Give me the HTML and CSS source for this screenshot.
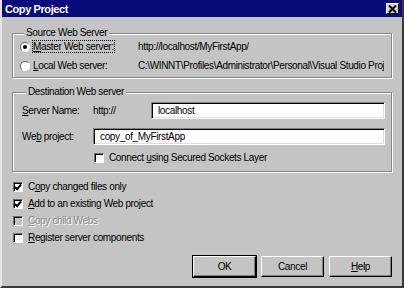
FILE: index.html
```html
<!DOCTYPE html>
<html lang="en">
<head>
    <meta charset="UTF-8">
    <title>Copy Project</title>
    <link rel="stylesheet" href="styles.css">
</head>
<body>
    <div class="dialog">
        <div class="titlebar">
            <span class="title">Copy Project</span>
            <span class="close-btn">
                <svg width="9" height="8" viewBox="0 0 9 8"><path d="M1 0.5 L8 7.5 M8 0.5 L1 7.5" stroke="#000" stroke-width="2"/></svg>
            </span>
        </div>

        <div class="content">
            <!-- Source server -->
            <fieldset class="group source">
                <legend>Source Web Server</legend>
                <div class="radio-row">
                    <span class="radio checked"></span>
                    <span class="radio-label"><span class="focus"><u>M</u>aster Web server:</span></span>
                    <span class="value">http://localhost/MyFirstApp/</span>
                </div>
                <div class="radio-row">
                    <span class="radio"></span>
                    <span class="radio-label"><u>L</u>ocal Web server:</span>
                    <span class="value">C:\WINNT\Profiles\Administrator\Personal\Visual Studio Proj</span>
                </div>
            </fieldset>

            <!-- Destination server -->
            <fieldset class="group dest">
                <legend>Destination Web server</legend>
                <div class="form-grid">
                    <span class="field-label"><u>S</u>erver Name:</span>
                    <div class="server-field">
                        <span class="prefix">http://</span>
                        <div class="textbox">localhost</div>
                    </div>
                    <span class="field-label">We<u>b</u> project:</span>
                    <div class="textbox">copy_of_MyFirstApp</div>
                    <span></span>
                    <div class="check-row">
                        <span class="checkbox"></span>
                        <span>Connect <u>u</u>sing Secured Sockets Layer</span>
                    </div>
                </div>
            </fieldset>

            <!-- Options -->
            <div class="options">
                <div class="check-row">
                    <span class="checkbox checked"></span>
                    <span>C<u>o</u>py changed files only</span>
                </div>
                <div class="check-row">
                    <span class="checkbox checked"></span>
                    <span><u>A</u>dd to an existing Web project</span>
                </div>
                <div class="check-row disabled">
                    <span class="checkbox"></span>
                    <span><u>C</u>opy child Webs</span>
                </div>
                <div class="check-row">
                    <span class="checkbox"></span>
                    <span><u>R</u>egister server components</span>
                </div>
            </div>

            <div class="buttons">
                <button class="btn default">OK</button>
                <button class="btn">Cancel</button>
                <button class="btn"><u>H</u>elp</button>
            </div>
        </div>
    </div>
</body>
</html>
```

FILE: styles.css
```css
body {
    margin: 0;
    font-family: "Liberation Sans", Arial, sans-serif;
    font-size: 10px;
    letter-spacing: -0.35px;
    color: #000;
    background: #c4c4c4;
}
.dialog {
    width: 404px;
    height: 288px;
    box-sizing: border-box;
    background: #c4c4c4;
    border-left: 2px solid #e4e4e4;
    border-right: 2px solid #3a3a3a;
    border-bottom: 2px solid #3a3a3a;
    overflow: hidden;
}
/* Barre de titre */
.titlebar {
    height: 17px;
    margin: 0 -2px;
    padding: 0 5px 0 5px;
    background: #0a0a7c;
    display: flex;
    align-items: center;
}
.title {
    color: #fff;
    font-weight: bold;
    font-size: 11px;
    letter-spacing: -0.4px;
}
.close-btn {
    margin-left: auto;
    width: 13px;
    height: 11px;
    box-sizing: border-box;
    background: #d4d4d4;
    border: 1px solid;
    border-color: #fff #000 #000 #fff;
    display: flex;
    align-items: center;
    justify-content: center;
}
.content {
    padding: 10px 10px 0 10px;
}
/* Cadres */
.group {
    margin: 0;
    border: 1px solid #868686;
    box-shadow: inset 1px 1px 0 #fff, 1px 1px 0 #fff;
    min-width: 0;
}
.group legend {
    padding: 0 2px;
    margin-left: 4px;
    line-height: 12px;
    background: #c4c4c4;
}
.source {
    padding: 0 6px 4px 7px;
}
.radio-row {
    height: 15px;
    display: flex;
    align-items: center;
    margin-top: 4px;
    white-space: nowrap;
}
.radio-row:first-of-type {
    margin-top: 0;
}
.radio {
    width: 10px;
    height: 10px;
    box-sizing: border-box;
    border-radius: 50%;
    border: 1px solid;
    border-color: #6a6a6a #fff #fff #6a6a6a;
    background: #fff;
    display: flex;
    align-items: center;
    justify-content: center;
    flex: none;
}
.radio.checked::after {
    content: "";
    width: 4px;
    height: 4px;
    border-radius: 50%;
    background: #000;
}
.radio-label {
    margin-left: 3px;
    width: 105px;
    flex: none;
}
.focus {
    outline: 1px dotted #000;
    outline-offset: 0;
}
.value {
    overflow: hidden;
}
.dest {
    margin-top: 8px;
    padding: 4px 6px 5px 9px;
}
.form-grid {
    display: grid;
    grid-template-columns: 71px 1fr;
    row-gap: 9px;
    align-items: center;
}
.form-grid .check-row {
    margin-top: -5px;
    padding-left: 1px;
}
.server-field {
    display: flex;
    align-items: center;
}
.prefix {
    width: 58px;
}
.textbox {
    flex: 1;
    height: 17px;
    box-sizing: border-box;
    background: #fff;
    border: 1px solid;
    border-color: #808080 #fff #fff #808080;
    box-shadow: inset 1px 1px 0 #000, inset -1px -1px 0 #dedede;
    padding: 0 0 0 6px;
    line-height: 15px;
}
/* Cases à cocher */
.check-row {
    display: flex;
    align-items: center;
    height: 17px;
    gap: 5px;
}
.checkbox {
    width: 10px;
    height: 10px;
    box-sizing: border-box;
    border: 1px solid;
    border-color: #6a6a6a #fff #fff #6a6a6a;
    box-shadow: inset 1px 1px 0 #000;
    background: #fff;
    flex: none;
    position: relative;
}
.checkbox.checked::after {
    content: "";
    position: absolute;
    left: 2px;
    top: 0px;
    width: 2px;
    height: 5px;
    border: solid #000;
    border-width: 0 2px 2px 0;
    transform: rotate(40deg);
}
.options {
    margin-top: 6px;
    padding-left: 1px;
}
.check-row.disabled {
    color: #8a8a8a;
    text-shadow: 1px 1px 0 #fff;
}
.check-row.disabled .checkbox {
    background: #c4c4c4;
}
/* Boutons */
.buttons {
    display: flex;
    justify-content: flex-end;
    gap: 5px;
    margin-top: 10px;
}
.btn {
    width: 63px;
    height: 21px;
    font: inherit;
    letter-spacing: inherit;
    background: #c4c4c4;
    border: 1px solid;
    border-color: #fff #000 #000 #fff;
    box-shadow: inset -1px -1px 0 #808080;
    padding: 0;
}
.btn.default {
    outline: 1px solid #000;
    outline-offset: 0;
    box-shadow: inset -1px -1px 0 #808080, 1px 1px 0 #000;
}
```
